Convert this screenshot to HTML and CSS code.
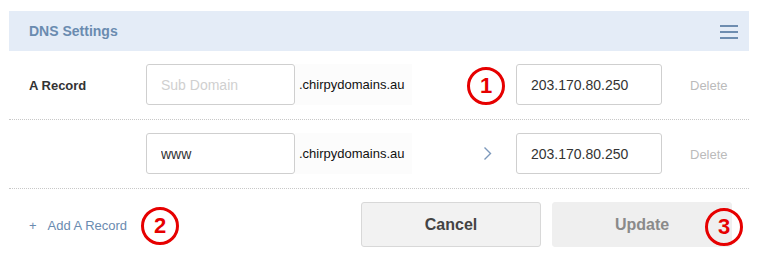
FILE: index.html
```html
<!DOCTYPE html>
<html lang="en">
<head>
  <meta charset="UTF-8"/>
  <title>DNS Settings</title>
  <link rel="stylesheet" href="styles.css">
</head>
<body>
  <div class="panel">
    <div class="head">
      <h2>DNS Settings</h2>
      <svg class="menu" width="18" height="14" viewBox="0 0 18 14">
        <rect x="0" y="0" width="18" height="2"/>
        <rect x="0" y="6" width="18" height="2"/>
        <rect x="0" y="12" width="18" height="2"/>
      </svg>
    </div>

    <div class="row">
      <div class="label">A Record</div>
      <input class="sub" type="text" placeholder="Sub Domain">
      <div class="domain">.chirpydomains.au</div>
      <div class="mid"><span class="mark mark-1">1</span></div>
      <input class="ip" type="text" value="203.170.80.250">
      <div class="del">Delete</div>
    </div>

    <div class="row">
      <div class="label"></div>
      <input class="sub" type="text" value="www">
      <div class="domain">.chirpydomains.au</div>
      <div class="mid">
        <svg class="chev" width="9" height="15" viewBox="0 0 9 15">
          <polyline points="1.5,1.5 7.5,7.5 1.5,13.5" fill="none" stroke="#7b98bb" stroke-width="1.4"/>
        </svg>
      </div>
      <input class="ip" type="text" value="203.170.80.250">
      <div class="del">Delete</div>
    </div>

    <div class="foot">
      <a class="add"><span class="plus">+</span>Add A Record</a>
      <span class="mark mark-2">2</span>
      <div class="btns">
        <button class="btn cancel">Cancel</button>
        <button class="btn update">Update<span class="mark mark-3">3</span></button>
      </div>
    </div>
  </div>
</body>
</html>
```

FILE: styles.css
```css
:root {
  --head: #e4ecf7;
  --blue: #6a8bb0;
  --border: #cfcfcf;
  --red: #e60000;
}
* { box-sizing: border-box; margin: 0; padding: 0 }
body {
  background: #fff;
  font-family: "Liberation Sans", Arial, sans-serif;
  color: #222;
  padding: 11px 11px 0 9px;
}
.panel { width: 740px }
.head {
  height: 40px;
  background: var(--head);
  display: flex;
  align-items: center;
  justify-content: space-between;
  padding: 0 11px 0 20px;
}
.head h2 {
  font-size: 14px;
  font-weight: bold;
  color: var(--blue);
}
.menu { fill: #6e8db0; margin-top: 1px }

.row {
  display: grid;
  grid-template-columns: 117px 149px 117px 104px 146px 1fr;
  align-items: center;
  padding: 13px 0 14px 20px;
  border-bottom: 1px dotted #c8c8c8;
}
.label { font-size: 13px; font-weight: bold; color: #333; padding-top: 2px }
input {
  height: 41px;
  border: 1px solid var(--border);
  border-radius: 3px;
  font-family: inherit;
  font-size: 14px;
  color: #333;
  padding: 0 14px;
  outline: none;
}
input::placeholder { color: #d0d0d0 }
.domain {
  height: 41px;
  line-height: 41px;
  font-size: 13px;
  color: #111;
  padding-left: 4px;
  background: #fcfcfc;
}
.mid {
  position: relative;
  height: 41px;
  display: flex;
  align-items: center;
  justify-content: flex-end;
  padding-right: 24px;
}
.del { font-size: 13px; color: #bbb; padding: 2px 0 0 28px }

.foot {
  display: flex;
  align-items: center;
  padding: 13px 17px 0 20px;
}
.add {
  font-size: 13px;
  color: var(--blue);
  padding-top: 1px;
}
.plus { margin-right: 11px }
.btns { margin-left: auto; display: flex; gap: 11px }
.btn {
  width: 180px;
  height: 45px;
  border-radius: 3px;
  font-family: inherit;
  font-size: 16px;
  font-weight: bold;
  position: relative;
}
.cancel { background: #f2f2f2; border: 1px solid #d8d8d8; color: #444 }
.update { background: #efefef; border: 1px solid #efefef; color: #8a8a8a }

.mark {
  display: inline-flex;
  align-items: center;
  justify-content: center;
  width: 38px;
  height: 38px;
  border: 3px solid var(--red);
  border-radius: 50%;
  color: var(--red);
  font-family: "Liberation Sans", Arial, sans-serif;
  font-size: 22px;
  font-weight: bold;
  background: transparent;
}
.mark-1 { position: absolute; right: 11px; top: 3px }
.mark-2 { margin-left: 14px; margin-top: 2px }
.mark-3 { position: absolute; right: -12px; top: 5px }
```
